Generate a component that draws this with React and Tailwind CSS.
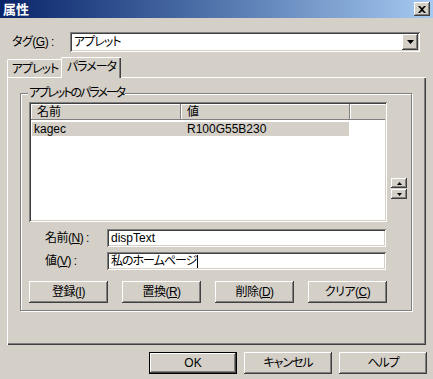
import React from "react";

const font =
  "font-['Liberation_Sans','Noto_Sans_CJK_JP',sans-serif] [font-feature-settings:'palt'] text-[12px] leading-none text-black";

const raised =
  "bg-[#d4d0c8] shadow-[inset_-1px_-1px_#404040,inset_1px_1px_#ffffff,inset_-2px_-2px_#808080]";

const sunken =
  "bg-white shadow-[inset_1px_1px_#808080,inset_-1px_-1px_#ffffff,inset_2px_2px_#404040,inset_-2px_-2px_#d4d0c8]";

function Button({ children, className = "" }) {
  return (
    <div className={`flex items-center justify-center ${raised} ${className}`}>
      {children}
    </div>
  );
}

function Field({ children, className = "" }) {
  return (
    <div className={`flex items-center pl-[4px] ${sunken} ${className}`}>
      {children}
    </div>
  );
}

export default function App() {
  return (
    <div className={`flex h-[379px] w-[433px] flex-col overflow-hidden bg-[#d4d0c8] ${font}`}>
      {/* Title bar */}
      <div className="flex h-[18px] items-center justify-between bg-gradient-to-r from-[#0a246a] to-[#a6caf0] pl-[3px] pr-[3px]">
        <span className="text-[13px] font-bold text-white">属性</span>
        <div className={`flex h-[14px] w-[16px] items-center justify-center ${raised}`}>
          <svg width="8" height="7" viewBox="0 0 8 7">
            <path d="M0 0h2l2 2 2-2h2L5 3.5 8 7H6L4 5 2 7H0l3-3.5z" fill="#000" />
          </svg>
        </div>
      </div>

      {/* Tag row */}
      <div className="mt-[14px] flex items-center">
        <span className="ml-[12px] w-[58px] tracking-[-0.5px]">
          タグ(<u>G</u>) :
        </span>
        <div className={`flex h-[20px] w-[350px] items-center justify-between pl-[4px] pr-[2px] ${sunken}`}>
          <span className="tracking-[-1px]">アプレット</span>
          <div className={`flex h-[16px] w-[16px] items-center justify-center ${raised}`}>
            <svg width="7" height="4" viewBox="0 0 7 4">
              <path d="M0 0h7L3.5 4z" fill="#000" />
            </svg>
          </div>
        </div>
      </div>

      {/* Tabs */}
      <div className="ml-[7px] mt-[5px] flex items-end">
        <div className="flex h-[18px] w-[55px] items-center justify-center rounded-tl-[2px] border-l border-t border-white tracking-[-1px] shadow-[inset_-1px_0_#808080]">
          アプレット
        </div>
        <div className="relative z-10 -mb-[1px] -ml-[1px] flex h-[21px] w-[60px] items-center justify-center rounded-tl-[2px] border-l border-t border-white bg-[#d4d0c8] pb-[2px] tracking-[-1px] shadow-[inset_-1px_0_#404040,inset_-2px_0_#808080]">
          パラメータ
        </div>
      </div>

      {/* Tab panel */}
      <div className="ml-[7px] h-[268px] w-[419px] border-l border-t border-white shadow-[inset_-1px_-1px_#404040,inset_-2px_-2px_#808080]">
        <div className="relative ml-[12px] mt-[15px] h-[218px] w-[392px] border border-[#808080] pl-[8px] pt-[8px] shadow-[inset_1px_1px_#ffffff,1px_1px_#ffffff]">
          <span className="absolute -top-[7px] left-[7px] bg-[#d4d0c8] px-[1px] tracking-[-2px]">
            アプレットのパラメータ
          </span>

          {/* List + spin */}
          <div className="flex">
            <div className={`h-[120px] w-[358px] p-[2px] ${sunken}`}>
              <div className="flex h-[16px]">
                <div className="flex w-[150px] items-center bg-[#d4d0c8] pl-[6px] shadow-[inset_-1px_-1px_#808080,inset_1px_1px_#ffffff]">
                  名前
                </div>
                <div className="flex w-[169px] items-center bg-[#d4d0c8] pl-[6px] shadow-[inset_-1px_-1px_#808080,inset_1px_1px_#ffffff]">
                  値
                </div>
                <div className="flex-1 bg-[#d4d0c8] shadow-[inset_0_-1px_#808080,inset_1px_1px_#ffffff]" />
              </div>
              <div className="ml-[1px] mt-[2px] flex h-[14px] w-[317px] items-center bg-[#d4d0c8]">
                <span className="w-[155px] pl-[2px]">kagec</span>
                <span>R100G55B230</span>
              </div>
            </div>
            <div className="ml-[4px] mt-[76px] flex flex-col gap-[1px]">
              <div className={`flex h-[10px] w-[16px] items-center justify-center ${raised}`}>
                <svg width="5" height="3" viewBox="0 0 5 3">
                  <path d="M2.5 0L5 3H0z" fill="#000" />
                </svg>
              </div>
              <div className={`flex h-[10px] w-[16px] items-center justify-center ${raised}`}>
                <svg width="5" height="3" viewBox="0 0 5 3">
                  <path d="M0 0h5L2.5 3z" fill="#000" />
                </svg>
              </div>
            </div>
          </div>

          {/* Name / value */}
          <div className="mt-[7px] flex items-center">
            <span className="ml-[16px] w-[62px] tracking-[-0.5px]">
              名前(<u>N</u>) :
            </span>
            <Field className="h-[18px] w-[279px]">dispText</Field>
          </div>
          <div className="mt-[5px] flex items-center">
            <span className="ml-[16px] w-[62px] tracking-[-0.5px]">
              値(<u>V</u>) :
            </span>
            <Field className="h-[18px] w-[279px]">
              <span className="tracking-[-1px]">私のホームページ</span>
              <span className="ml-[1px] inline-block h-[13px] w-[1px] bg-black" />
            </Field>
          </div>

          {/* Action buttons */}
          <div className="mt-[11px] flex gap-[14px] tracking-[-0.5px]">
            <Button className="h-[22px] w-[79px]">
              登録(<u>I</u>)
            </Button>
            <Button className="h-[22px] w-[79px]">
              置換(<u>R</u>)
            </Button>
            <Button className="h-[22px] w-[79px]">
              削除(<u>D</u>)
            </Button>
            <Button className="h-[22px] w-[79px]">
              クリア(<u>C</u>)
            </Button>
          </div>
        </div>
      </div>

      {/* Dialog buttons */}
      <div className="mt-[7px] flex justify-end gap-[7px] pr-[6px]">
        <div className="h-[22px] w-[88px] border border-black">
          <Button className="h-full w-full">OK</Button>
        </div>
        <Button className="h-[22px] w-[88px] tracking-[-1px]">キャンセル</Button>
        <Button className="h-[22px] w-[88px] tracking-[-1px]">ヘルプ</Button>
      </div>
    </div>
  );
}
